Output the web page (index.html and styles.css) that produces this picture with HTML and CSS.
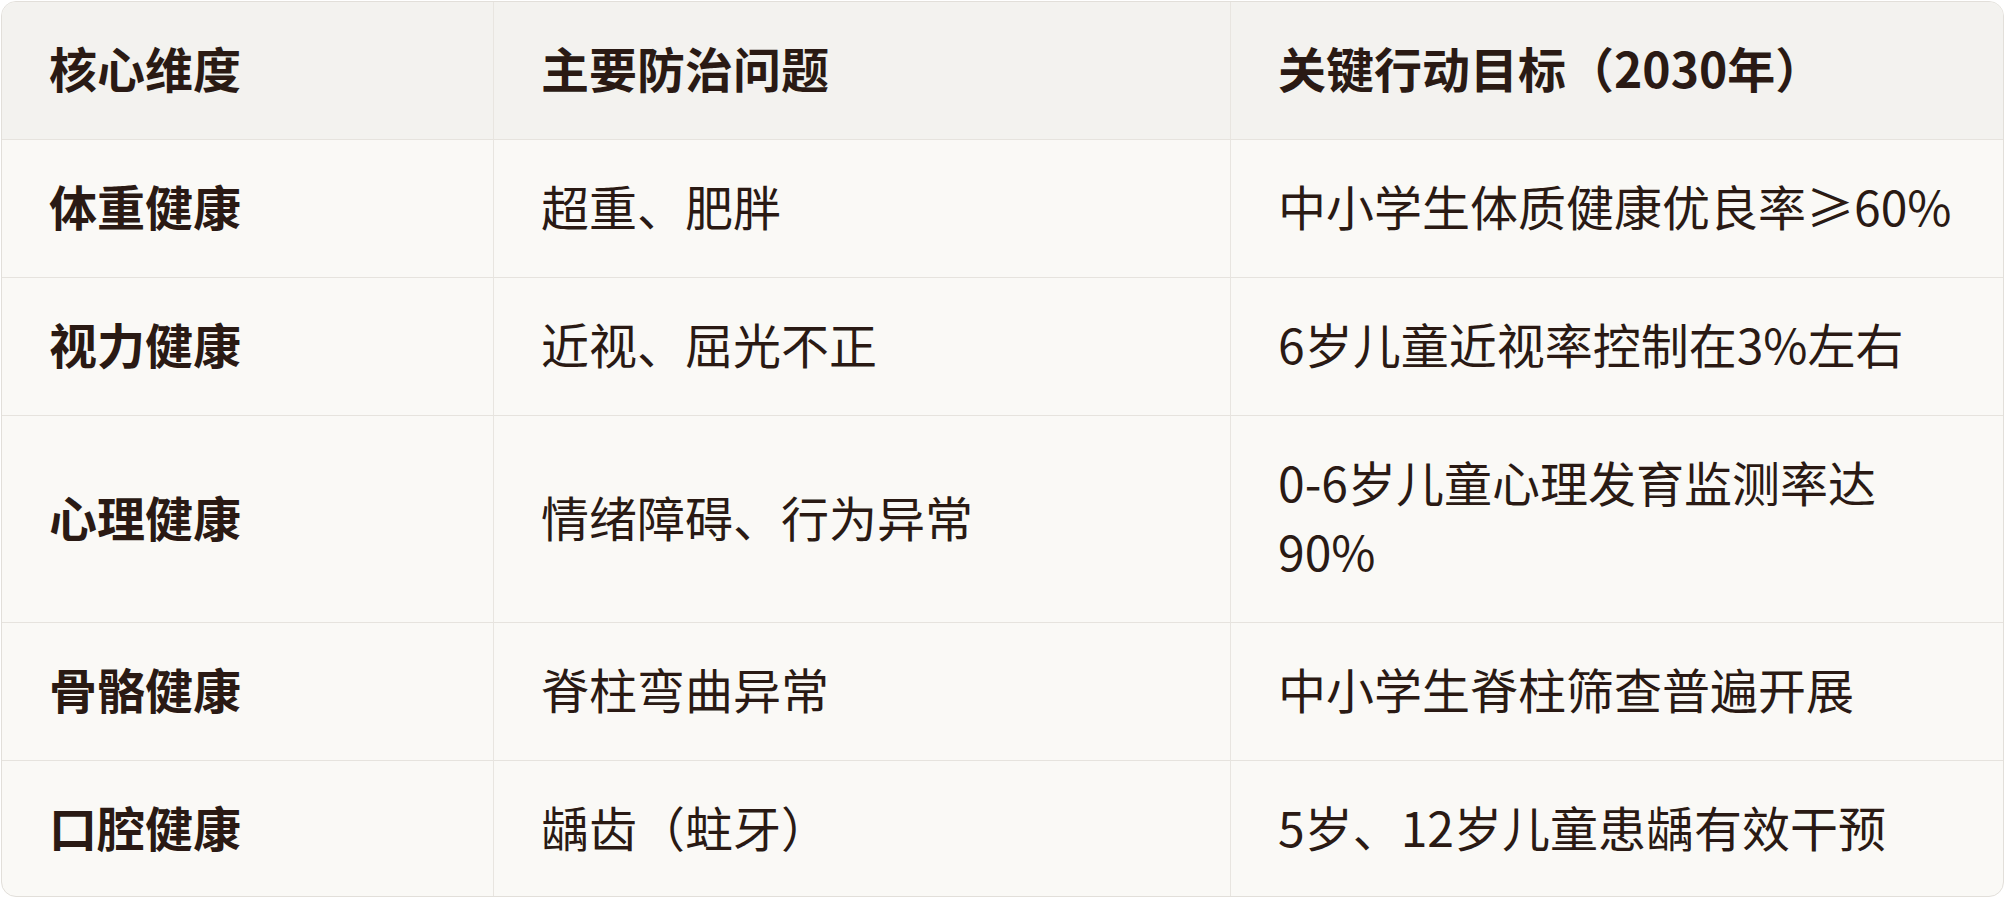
FILE: index.html
```html
<!DOCTYPE html>
<html lang="zh-CN">
<head>
<meta charset="utf-8">
<title>儿童健康</title>
<link rel="stylesheet" href="styles.css">
</head>
<body>
<div class="wrap">
<table class="grid">
<colgroup><col class="c1"><col class="c2"><col class="c3"></colgroup>
<thead>
<tr><th>核心维度</th><th>主要防治问题</th><th>关键行动目标（2030年）</th></tr>
</thead>
<tbody>
<tr><td class="dim">体重健康</td><td>超重、肥胖</td><td>中小学生体质健康优良率≥60%</td></tr>
<tr><td class="dim">视力健康</td><td>近视、屈光不正</td><td>6岁儿童近视率控制在3%左右</td></tr>
<tr><td class="dim">心理健康</td><td>情绪障碍、行为异常</td><td>0-6岁儿童心理发育监测率达90%</td></tr>
<tr><td class="dim">骨骼健康</td><td>脊柱弯曲异常</td><td>中小学生脊柱筛查普遍开展</td></tr>
<tr><td class="dim">口腔健康</td><td>龋齿（蛀牙）</td><td>5岁、12岁儿童患龋有效干预</td></tr>
</tbody>
</table>
</div>
</body>
</html>
```
FILE: styles.css
```css
html, body {
  margin: 0;
  padding: 0;
  background: #ffffff;
}
.wrap {
  margin: 1px 2px 2px 1px;
  border: 1.5px solid #e2dfda;
  border-radius: 15px;
  overflow: hidden;
  background: #faf9f6;
}
.grid {
  width: 100%;
  border-collapse: separate;
  border-spacing: 0;
  table-layout: fixed;
  font-family: "Noto Sans CJK SC", "Noto Sans", sans-serif;
  color: #2a1a14;
  font-size: 48px;
  line-height: 69px;
}
.c1 { width: 491px; }
.c2 { width: 737px; }
.c3 { width: auto; }
.grid th, .grid td {
  text-align: left;
  vertical-align: middle;
  padding: 31px 42px 37px 47px;
  border-bottom: 1.5px solid #e6e3de;
  border-left: 1px solid #e8e5e0;
}
.grid th:first-child, .grid td:first-child {
  border-left: none;
}
.grid tbody tr:last-child td {
  border-bottom: none;
  padding-bottom: 35px;
}
.grid th {
  background: #f3f2ef;
  font-weight: 700;
}
.grid td {
  font-weight: 400;
}
.grid td.dim {
  font-weight: 700;
}
```
